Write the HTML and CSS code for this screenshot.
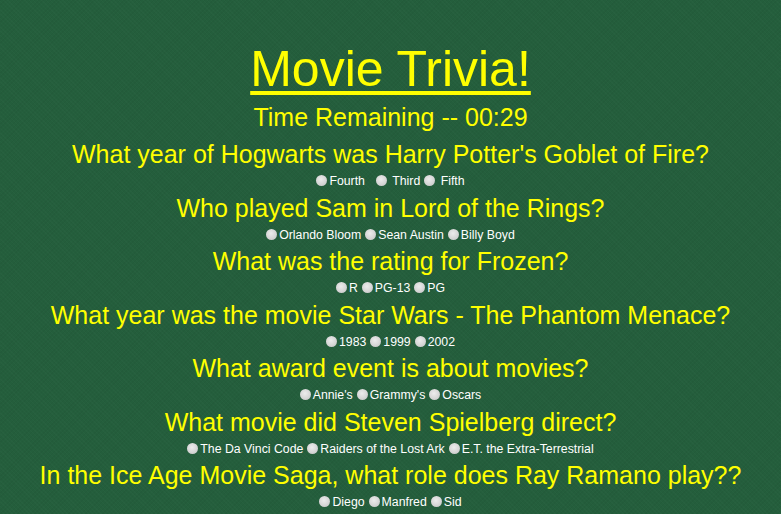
FILE: index.html
```html
<!DOCTYPE html>
<html>
<head>
<meta charset="utf-8">
<link rel="stylesheet" href="styles.css">
</head>
<body>
<div class="page">
  <h1 class="title">Movie Trivia!</h1>
  <p class="timer">Time Remaining -- 00:29</p>

  <div class="question">
    <p class="q">What year of Hogwarts was Harry Potter's Goblet of Fire?</p>
    <div class="answers"><input type="radio" name="q1"><span>Fourth&nbsp;&nbsp;</span><input type="radio" name="q1"><span>&nbsp;Third</span><input type="radio" name="q1"><span>&nbsp;Fifth</span></div>
  </div>

  <div class="question">
    <p class="q">Who played Sam in Lord of the Rings?</p>
    <div class="answers"><input type="radio" name="q2"><span>Orlando Bloom</span><input type="radio" name="q2"><span>Sean Austin</span><input type="radio" name="q2"><span>Billy Boyd</span></div>
  </div>

  <div class="question">
    <p class="q">What was the rating for Frozen?</p>
    <div class="answers"><input type="radio" name="q3"><span>R</span><input type="radio" name="q3"><span>PG-13</span><input type="radio" name="q3"><span>PG</span></div>
  </div>

  <div class="question">
    <p class="q">What year was the movie Star Wars - The Phantom Menace?</p>
    <div class="answers"><input type="radio" name="q4"><span>1983</span><input type="radio" name="q4"><span>1999</span><input type="radio" name="q4"><span>2002</span></div>
  </div>

  <div class="question">
    <p class="q">What award event is about movies?</p>
    <div class="answers"><input type="radio" name="q5"><span>Annie's</span><input type="radio" name="q5"><span>Grammy's</span><input type="radio" name="q5"><span>Oscars</span></div>
  </div>

  <div class="question">
    <p class="q">What movie did Steven Spielberg direct?</p>
    <div class="answers"><input type="radio" name="q6"><span>The Da Vinci Code</span><input type="radio" name="q6"><span>Raiders of the Lost Ark</span><input type="radio" name="q6"><span>E.T. the Extra-Terrestrial</span></div>
  </div>

  <div class="question">
    <p class="q">In the Ice Age Movie Saga, what role does Ray Ramano play??</p>
    <div class="answers"><input type="radio" name="q7"><span>Diego</span><input type="radio" name="q7"><span>Manfred</span><input type="radio" name="q7"><span>Sid</span></div>
  </div>
</div>
</body>
</html>
```

FILE: styles.css
```css
html, body {
  margin: 0;
  padding: 0;
}
body {
  background-color: #245e3c;
  background-image:
    repeating-linear-gradient(45deg, rgba(255,255,255,0.015) 0 1px, transparent 1px 3px),
    repeating-linear-gradient(-45deg, rgba(0,0,0,0.03) 0 1px, transparent 1px 3px);
  font-family: "Liberation Sans", Arial, sans-serif;
  color: #ffff00;
  text-align: center;
}
.page {
  padding-top: 40px;
}
.title {
  margin: 0;
  font-size: 50px;
  font-weight: normal;
  line-height: 58px;
  text-decoration: underline;
  text-decoration-thickness: 4px;
  text-underline-offset: 5px;
}
.timer {
  margin: 4px 0 8px;
  font-size: 25px;
  line-height: 30px;
}
.question {
  display: flex;
  flex-direction: column;
}
.q {
  margin: 0;
  font-size: 25px;
  line-height: 29px;
}
.answers {
  font-size: 12.3px;
  line-height: 24.5px;
  color: #ffffff;
}
.answers input {
  -webkit-appearance: none;
  appearance: none;
  width: 11px;
  height: 11px;
  margin: 0 2px 0 4px;
  border-radius: 50%;
  background: radial-gradient(circle at 45% 40%, #ececec 0%, #d6d6d6 55%, #bdbdbd 100%);
  vertical-align: -1px;
}
.answers input:first-child {
  margin-left: 0;
}
```
